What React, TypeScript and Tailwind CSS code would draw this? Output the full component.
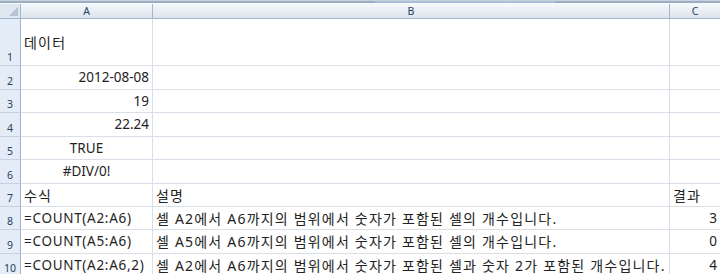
type Kind = "ko" | "num" | "fx";

const rows: { n: number; h: string; a: string; aKind: Kind; aAlign: string; b: string; c: string }[] = [
  { n: 1, h: "h-[47px]", a: "데이터", aKind: "ko", aAlign: "justify-start", b: "", c: "" },
  { n: 2, h: "h-[24px]", a: "2012-08-08", aKind: "num", aAlign: "justify-end", b: "", c: "" },
  { n: 3, h: "h-[23px]", a: "19", aKind: "num", aAlign: "justify-end", b: "", c: "" },
  { n: 4, h: "h-[24px]", a: "22.24", aKind: "num", aAlign: "justify-end", b: "", c: "" },
  { n: 5, h: "h-[23px]", a: "TRUE", aKind: "num", aAlign: "justify-center", b: "", c: "" },
  { n: 6, h: "h-[24px]", a: "#DIV/0!", aKind: "num", aAlign: "justify-center", b: "", c: "" },
  { n: 7, h: "h-[23px]", a: "수식", aKind: "ko", aAlign: "justify-start", b: "설명", c: "결과" },
  {
    n: 8,
    h: "h-[23px]",
    a: "=COUNT(A2:A6)",
    aKind: "fx",
    aAlign: "justify-start",
    b: "셀 A2에서 A6까지의 범위에서 숫자가 포함된 셀의 개수입니다.",
    c: "3",
  },
  {
    n: 9,
    h: "h-[24px]",
    a: "=COUNT(A5:A6)",
    aKind: "fx",
    aAlign: "justify-start",
    b: "셀 A5에서 A6까지의 범위에서 숫자가 포함된 셀의 개수입니다.",
    c: "0",
  },
  {
    n: 10,
    h: "h-[23px]",
    a: "=COUNT(A2:A6,2)",
    aKind: "fx",
    aAlign: "justify-start",
    b: "셀 A2에서 A6까지의 범위에서 숫자가 포함된 셀과 숫자 2가 포함된 개수입니다.",
    c: "4",
  },
];

const base = "font-['Noto_Sans','Noto_Sans_CJK_KR',sans-serif] text-[#232323] whitespace-nowrap";
const kinds: Record<Kind, string> = {
  ko: "text-[14px] tracking-[1.2px]",
  num: "text-[13.5px]",
  fx: "text-[13.5px] tracking-[0.7px]",
};

export default function App() {
  return (
    <div className="w-[720px] h-[274px] overflow-hidden bg-white">
      {/* window strip above the headers */}
      <div className="h-[4px] flex flex-col">
        <div className="h-[1px] bg-[#c9d1dc]" />
        <div className="h-[2px] bg-[#9caec4] flex">
          <div className="w-[375px]" />
          <div className="w-[180px] bg-[#a9bfdc]" />
        </div>
        <div className="h-[1px] bg-[#f4f7fb]" />
      </div>

      {/* column headers */}
      <div className="flex h-[15px] font-['Noto_Sans',sans-serif] text-[10.5px] text-[#27415f] leading-none">
        <div className="w-[21px] relative bg-[#dfe7f1] border-r border-b border-[#9eb6ce]">
          <svg className="absolute right-[2px] bottom-[2px]" width="9" height="9" viewBox="0 0 9 9">
            <path d="M9 0 L9 9 L0 9 Z" fill="#b4c2d3" />
          </svg>
        </div>
        <div className="w-[132px] flex items-center justify-center bg-gradient-to-b from-[#f6f8fb] to-[#dce3ec] border-r border-b border-[#9eb6ce]">
          A
        </div>
        <div className="w-[517px] flex items-center justify-center bg-gradient-to-b from-[#f6f8fb] to-[#dce3ec] border-r border-b border-[#9eb6ce]">
          B
        </div>
        <div className="w-[50px] flex items-center justify-center bg-gradient-to-b from-[#f6f8fb] to-[#dce3ec] border-b border-[#9eb6ce]">
          C
        </div>
      </div>

      {rows.map((r) => (
        <div key={r.n} className={`flex ${r.h}`}>
          <div className="w-[21px] flex items-end justify-center pb-[3px] bg-[#e4ecf7] border-r border-r-[#9eb6ce] border-b border-b-[#c5d2e2] font-['Noto_Sans',sans-serif] text-[10.5px] leading-none text-[#27415f]">
            {r.n}
          </div>
          <div className={`w-[132px] flex items-center ${r.aAlign} px-[3px] border-r border-b border-[#d8dfe9] ${base} ${kinds[r.aKind]}`}>
            {r.a}
          </div>
          <div className={`w-[517px] flex items-center px-[3px] border-r border-b border-[#d8dfe9] ${base} ${kinds.ko}`}>
            {r.b}
          </div>
          <div
            className={`w-[50px] flex items-center ${r.n === 7 ? "justify-start" : "justify-end"} px-[3px] border-b border-[#d8dfe9] ${base} ${r.n === 7 ? kinds.ko : kinds.num}`}
          >
            {r.c}
          </div>
        </div>
      ))}
    </div>
  );
}
